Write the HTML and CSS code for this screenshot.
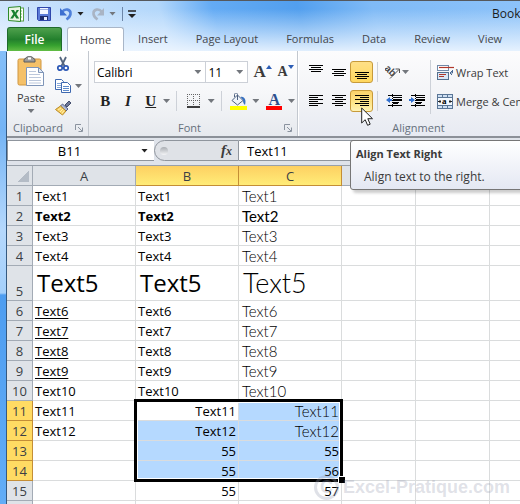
FILE: index.html
```html
<!DOCTYPE html>
<html lang="en">
<head>
  <meta charset="UTF-8">
  <meta name="viewport" content="width=device-width, initial-scale=1.0">
  <title>Book1</title>
  <link rel="stylesheet" href="styles.css">
</head>
<body>
  <div class="window">
    <header class="titlebar">
      <svg class="logo" width="16" height="16" viewBox="0 0 16 16">
        <rect x="9" y="2" width="6.500" height="13" fill="#fff" stroke="#58a046"/>
        <path d="M11 5h3M11 8h3M11 11h3" stroke="#76b867"/>
        <path d="M.5 1.500 12.500.5v15L.5 14.500z" fill="#e9f5e3" stroke="#2f8a2a"/>
        <path d="M3 4h3l1.200 2.500L8.600 4H11L8.300 8l2.900 4.500H8.300L6.600 9.700 5 12.500H2.200L5.300 8z" fill="#188130"/>
      </svg>
      <span class="bar"></span>
      <button class="quick save" aria-label="Save">
        <svg width="16" height="16" viewBox="0 0 16 16">
          <path d="M1.500 1.500h13v13h-12l-1-1z" fill="#5b7ad6" stroke="#2f46ab"/>
          <rect x="4" y="2" width="8" height="6" fill="#f3f6ff"/>
          <path d="M4 3.500h8" stroke="#9fb0e0"/>
          <rect x="4" y="10" width="8" height="4" fill="#1d2b6b"/>
          <rect x="8" y="11" width="3" height="3" fill="#e8edff"/>
        </svg>
      </button>
      <button class="quick undo" aria-label="Undo">
        <svg width="14" height="14" viewBox="0 0 14 14">
          <path d="M3 5C6 1 12 2 11.500 7c-.2 2.500-2 4-4 5.500" fill="none" stroke="#4f80da" stroke-width="2.600"/>
          <path d="M1 1v7.500h7z" fill="#3c6fd0"/>
        </svg>
      </button>
      <span class="arrow dark"></span>
      <button class="quick redo" aria-label="Redo">
        <svg width="14" height="14" viewBox="0 0 14 14">
          <path d="M11 5C8 1 2 2 2.500 7c.2 2.500 2 4 4 5.500" fill="none" stroke="#a9b4c4" stroke-width="2.600"/>
          <path d="M13 1v7.500H6z" fill="#a9b4c4"/>
        </svg>
      </button>
      <span class="arrow"></span>
      <span class="bar"></span>
      <button class="quick customize" aria-label="Customize Quick Access Toolbar">
        <svg width="8" height="8" viewBox="0 0 8 8"><path d="M0 1h8" stroke="#222" stroke-width="1.500"/><path d="M0 4h8L4 8z" fill="#222"/></svg>
      </button>
      <span class="title">Book1</span>
    </header>

    <nav class="tabs">
      <a class="tab file" href="#file">File</a>
      <a class="tab active" href="#home">Home</a>
      <a class="tab" href="#insert">Insert</a>
      <a class="tab" href="#layout">Page Layout</a>
      <a class="tab" href="#formulas">Formulas</a>
      <a class="tab" href="#data">Data</a>
      <a class="tab" href="#review">Review</a>
      <a class="tab" href="#view">View</a>
    </nav>

    <div class="ribbon">
      <section class="group clipboard">
        <div class="tools">
          <button class="paste">
            <svg width="28" height="32" viewBox="0 0 28 32">
              <rect x="1" y="4" width="23" height="26" rx="1.500" fill="#f5c169" stroke="#cf9640"/>
              <path d="M7 7V4.500L9 3c.5-2 6.500-2 7 0l2 1.500V7z" fill="#9b9b9b" stroke="#5d5d5d"/>
              <rect x="11" y="2.500" width="3" height="2" fill="#fff"/>
              <path d="M9.500 12.500h12l5 5v13h-17z" fill="#fff" stroke="#7f95b8"/>
              <path d="M21.500 12.500v5h5z" fill="#dfe8f5" stroke="#7f95b8"/>
              <path d="M12 16.500h7M12 19.500h11M12 22.500h12M12 25.500h12M12 28h12" stroke="#bcc8dc"/>
            </svg>
            <span>Paste</span>
            <span class="arrow"></span>
          </button>
          <div class="clips">
            <button aria-label="Cut">
              <svg width="16" height="16" viewBox="0 0 16 16">
                <path d="M5 1l4.500 9M11 1 6.500 10" stroke="#54657f" stroke-width="1.800"/>
                <circle cx="5" cy="12" r="2.200" fill="none" stroke="#2b57b5" stroke-width="1.700"/>
                <circle cx="11" cy="12" r="2.200" fill="none" stroke="#2b57b5" stroke-width="1.700"/>
              </svg>
            </button>
            <button aria-label="Copy">
              <svg width="16" height="16" viewBox="0 0 16 16">
                <path d="M.5 1.500h6l2 2v8h-8z" fill="#fff" stroke="#3f69b0"/>
                <path d="M2 5.500h5M2 7.500h5M2 9.500h5" stroke="#88a8d8"/>
                <path d="M6.500 4.500h6l3 3v7h-9z" fill="#fff" stroke="#3f69b0"/>
                <path d="M8 8.500h6M8 10.500h6M8 12.500h6" stroke="#5f8bcb"/>
              </svg>
              <span class="arrow"></span>
            </button>
            <button aria-label="Format Painter">
              <svg width="17" height="16" viewBox="0 0 17 16">
                <path d="M10 5l4-4 2 2-4 4z" fill="#6e7794" stroke="#424c6c"/>
                <path d="M7.500 4l5.500 5-2 2-5.500-5z" fill="#aeb8d4" stroke="#556088"/>
                <path d="M5.500 6l5.500 5-3.500 4L.5 9.500z" fill="#f7cf62" stroke="#b98a28"/>
                <path d="M3 10l3-2M5 12l3-3M7 13.500l2-3" stroke="#fff0b0"/>
              </svg>
            </button>
          </div>
        </div>
        <footer>
          <span>Clipboard</span>
          <svg class="launcher" width="8" height="8" viewBox="0 0 8 8"><path d="M.5 6V.5H6M3 3l4 4M7.500 3.500v4h-4" fill="none" stroke="#8a939f"/></svg>
        </footer>
      </section>

      <section class="group font">
        <div class="tools rows">
          <div class="row">
            <span class="combo family"><select aria-label="Font"><option>Calibri</option></select><span class="arrow"></span></span>
            <span class="combo size"><select aria-label="Font Size"><option>11</option></select><span class="arrow"></span></span>
            <button class="grow" aria-label="Grow Font"><b>A</b><svg width="6" height="4" viewBox="0 0 6 4"><path d="M0 4h6L3 0z" fill="#2c5db5"/></svg></button>
            <button class="shrink" aria-label="Shrink Font"><b>A</b><svg width="6" height="4" viewBox="0 0 6 4"><path d="M0 0h6L3 4z" fill="#2c5db5"/></svg></button>
          </div>
          <div class="row">
            <button class="letter"><b>B</b></button>
            <button class="letter"><i>I</i></button>
            <button class="letter"><u>U</u></button>
            <span class="arrow"></span>
            <span class="sep"></span>
            <button class="tool" aria-label="Borders">
              <svg width="14" height="14" viewBox="0 0 14 14">
                <path d="M.5 0v12M6.500 0v12M12.500 0v12M0 .5h13M0 6.500h13" stroke="#666" stroke-dasharray="1 1"/>
                <path d="M0 13h13" stroke="#000" stroke-width="1.500"/>
              </svg>
            </button>
            <span class="arrow"></span>
            <span class="sep"></span>
            <button class="tool" aria-label="Fill Color">
              <svg width="17" height="17" viewBox="0 0 17 17">
                <path d="M2 7.500 7.500 2 13 7.500 7.500 12z" fill="#eef3fa" stroke="#4e6180"/>
                <path d="M7.500 7V1.500c0-2-3-2-3 0V4" fill="none" stroke="#4e6180"/>
                <path d="M10.500 4c4-1 6 3 4.500 8-1.500-1-2-3-2-5z" fill="#3a72c0"/>
                <rect y="13" width="17" height="4" fill="#ff0"/>
              </svg>
            </button>
            <span class="arrow"></span>
            <button class="tool color" aria-label="Font Color"><b>A</b></button>
            <span class="arrow"></span>
          </div>
        </div>
        <footer>
          <span class="middle">Font</span>
          <svg class="launcher" width="8" height="8" viewBox="0 0 8 8"><path d="M.5 6V.5H6M3 3l4 4M7.500 3.500v4h-4" fill="none" stroke="#8a939f"/></svg>
        </footer>
      </section>

      <section class="group alignment">
        <div class="tools">
          <div class="rows">
            <div class="row">
              <button class="align" aria-label="Top Align"><svg width="14" height="14" viewBox="0 0 14 14"><path d="M0 .5h14M2 2.500h10M0 4.500h14M2 6.500h10" stroke="#000"/></svg></button>
              <button class="align" aria-label="Middle Align"><svg width="14" height="14" viewBox="0 0 14 14"><path d="M0 4.500h14M2 6.500h10M0 8.500h14M2 10.500h10" stroke="#000"/></svg></button>
              <button class="align on" aria-label="Bottom Align"><svg width="14" height="14" viewBox="0 0 14 14"><path d="M0 7.500h14M2 9.500h10M0 11.500h14M2 13.500h10" stroke="#000"/></svg></button>
              <span class="sep"></span>
              <button class="tool orient" aria-label="Orientation">
                <svg width="16" height="16" viewBox="0 0 16 16">
                  <text class="ab" x="-1" y="9" transform="rotate(45 4 7)">ab</text>
                  <path d="M5 14.500 14 5.500M10.500 5H14.500V9" fill="none" stroke="#555"/>
                </svg>
                <span class="arrow"></span>
              </button>
            </div>
            <div class="row">
              <button class="align" aria-label="Align Text Left"><svg width="14" height="14" viewBox="0 0 14 14"><path d="M0 1.500h14M0 3.500h9M0 5.500h14M0 7.500h9M0 9.500h14M0 11.500h9" stroke="#000"/></svg></button>
              <button class="align" aria-label="Center"><svg width="14" height="14" viewBox="0 0 14 14"><path d="M0 1.500h14M3 3.500h8M0 5.500h14M3 7.500h8M0 9.500h14M3 11.500h8" stroke="#000"/></svg></button>
              <button class="align on hot" aria-label="Align Text Right" aria-describedby="tip"><svg width="14" height="14" viewBox="0 0 14 14"><path d="M0 1.500h14M5 3.500h9M0 5.500h14M5 7.500h9M0 9.500h14M5 11.500h9" stroke="#000"/></svg></button>
              <span class="sep"></span>
              <button class="align" aria-label="Decrease Indent">
                <svg width="16" height="14" viewBox="0 0 16 14">
                  <path d="M2 1.500h14M7 3.500h9M7 9.500h5M2 11.500h14" stroke="#000"/><path d="M7 6h9" stroke="#000" stroke-width="2"/><path d="M7 8.500h6" stroke="#000"/>
                  <path d="M0 6l4-3v2h2v2H4v2z" fill="#2f6fd0"/><path d="M6.500 0v14" stroke="#000" stroke-dasharray="1 1"/>
                </svg>
              </button>
              <button class="align" aria-label="Increase Indent">
                <svg width="16" height="14" viewBox="0 0 16 14">
                  <path d="M2 1.500h14M7 3.500h9M7 9.500h5M2 11.500h14" stroke="#000"/><path d="M7 6h9" stroke="#000" stroke-width="2"/><path d="M7 8.500h6" stroke="#000"/>
                  <path d="M6 6 2 3v2H0v2h2v2z" fill="#2f6fd0"/><path d="M6.500 0v14" stroke="#000" stroke-dasharray="1 1"/>
                </svg>
              </button>
            </div>
          </div>
          <span class="divider"></span>
          <div class="rows">
            <button class="wide">
              <svg width="17" height="17" viewBox="0 0 17 17">
                <rect x=".5" y="1.500" width="11" height="5" fill="#fff" stroke="#7189a8"/>
                <rect x=".5" y="8.500" width="11" height="7" fill="#dbe7f5" stroke="#54708f"/>
                <path d="M2 3.500h15" stroke="#b0392c" stroke-width="1.200"/>
                <path d="M2 10.500h7M2 12.500h5" stroke="#b0392c"/>
                <path d="M15.500 6v3h-2M15 7l-2 2 2 2" fill="none" stroke="#4b6b94"/>
              </svg>
              <span>Wrap Text</span>
            </button>
            <button class="wide">
              <svg width="17" height="17" viewBox="0 0 17 17">
                <rect x=".5" y="1.500" width="15" height="14" fill="#cfe0f3" stroke="#5a7697"/>
                <path d="M1 4.500h14M1 12.500h14M5.500 2v2M10.500 2v2M5.500 13v2M10.500 13v2" stroke="#5a7697"/>
                <rect x="1" y="5" width="14" height="7" fill="#f4f9ff"/>
                <text class="a" x="5" y="11">a</text>
                <path d="M1 8.500h3M12 8.500h3M3 7v3M13 7v3" stroke="#222"/>
              </svg>
              <span>Merge &amp; Center</span>
            </button>
          </div>
        </div>
        <footer><span class="middle">Alignment</span></footer>
      </section>
    </div>

    <div class="formula-bar">
      <div class="name-box">
        <input type="text" value="B11" aria-label="Name Box">
        <span class="arrow dark"></span>
      </div>
      <div class="functions">
        <span class="knob"></span>
        <button aria-label="Insert Function"><i>f<small>x</small></i></button>
      </div>
      <input class="formula" type="text" value="Text11" aria-label="Formula">
    </div>

    <main class="sheet">
      <table>
        <colgroup>
          <col class="col-head"><col class="col-wide"><col class="col-wide"><col class="col-wide"><col class="col-std"><col class="col-std"><col class="col-std">
        </colgroup>
        <thead>
          <tr><th class="corner"></th><th>A</th><th class="sel">B</th><th class="sel">C</th><th></th><th></th><th></th></tr>
        </thead>
        <tbody>
          <tr><th>1</th><td>Text1</td><td>Text1</td><td class="thin">Text1</td><td></td><td></td><td></td></tr>
          <tr><th>2</th><td class="bold">Text2</td><td class="bold">Text2</td><td class="thin strong">Text2</td><td></td><td></td><td></td></tr>
          <tr><th>3</th><td>Text3</td><td>Text3</td><td class="thin">Text3</td><td></td><td></td><td></td></tr>
          <tr><th>4</th><td>Text4</td><td>Text4</td><td class="thin">Text4</td><td></td><td></td><td></td></tr>
          <tr class="tall"><th>5</th><td>Text5</td><td>Text5</td><td class="thin">Text5</td><td></td><td></td><td></td></tr>
          <tr><th>6</th><td class="under">Text6</td><td>Text6</td><td class="thin">Text6</td><td></td><td></td><td></td></tr>
          <tr><th>7</th><td class="under">Text7</td><td>Text7</td><td class="thin">Text7</td><td></td><td></td><td></td></tr>
          <tr><th>8</th><td class="under">Text8</td><td>Text8</td><td class="thin">Text8</td><td></td><td></td><td></td></tr>
          <tr><th>9</th><td class="under">Text9</td><td>Text9</td><td class="thin">Text9</td><td></td><td></td><td></td></tr>
          <tr><th>10</th><td>Text10</td><td>Text10</td><td class="thin">Text10</td><td></td><td></td><td></td></tr>
          <tr><th class="sel">11</th><td>Text11</td><td class="right current">Text11<span class="selection"></span></td><td class="right thin picked">Text11</td><td></td><td></td><td></td></tr>
          <tr><th class="sel">12</th><td>Text12</td><td class="right picked">Text12</td><td class="right thin picked">Text12</td><td></td><td></td><td></td></tr>
          <tr><th class="sel">13</th><td></td><td class="right picked">55</td><td class="right picked">55</td><td></td><td></td><td></td></tr>
          <tr><th class="sel">14</th><td></td><td class="right picked">55</td><td class="right picked">56</td><td></td><td></td><td></td></tr>
          <tr><th>15</th><td></td><td class="right">55</td><td class="right">57</td><td></td><td></td><td></td></tr>
          <tr><th></th><td></td><td></td><td></td><td></td><td></td><td></td></tr>
        </tbody>
      </table>
    </main>
  </div>

  <div class="tooltip" id="tip" role="tooltip">
    <strong>Align Text Right</strong>
    <p>Align text to the right.</p>
  </div>
  <svg class="cursor" width="13" height="20" viewBox="0 0 13 20">
    <path d="M.7 1v15l3.500-3.300 2.400 5.600 2.600-1.100-2.400-5.500h4.700z" fill="#fff" stroke="#222"/>
  </svg>
  <div class="watermark"><span class="copy">C</span><span>Excel-Pratique.com</span></div>
</body>
</html>
```

FILE: styles.css
```css
* {
  box-sizing: border-box;
}
body {
  margin: 0;
  height: 100vh;
  overflow: hidden;
  position: relative;
  font-family: "Open Sans", "Noto Sans", sans-serif;
  font-size: 11px;
  color: #3b3b3b;
  background: linear-gradient(to bottom, #8fc6fb 0, #74b4f5 130px, #b5d8fc 230px, #a5d0fb 293px, #4e9df0 295px, #62adf7 100%);
}
button {
  display: flex;
  align-items: center;
  justify-content: center;
  padding: 0;
  border: none;
  background: none;
  font: inherit;
  color: inherit;
}
svg {
  display: block;
  flex: none;
}
.window {
  height: 100%;
  padding-left: 6px;
  overflow: hidden;
  background:
    linear-gradient(to bottom, #35597f, #35597f) 6px 51px / 1px 100% no-repeat,
    linear-gradient(to bottom, rgba(255, 255, 255, 0) 8px, rgba(240, 247, 255, 0.9) 50px) 0 0 / 100% 50px no-repeat,
    linear-gradient(75deg, #cfe5fc 0, #b3d7fb 32%, #64abf4 42%, #529fee 58%, #7fbaf6 72%, #8cc2f9 100%) 0 0 / 100% 50px no-repeat;
  border-top: 1px solid #55585c;
}
.arrow {
  flex: none;
  width: 7px;
  height: 4px;
  background: #73777d;
  clip-path: polygon(0 0, 100% 0, 50% 100%);
}
.arrow.dark {
  background: #222;
}

/* title bar */
.titlebar {
  display: flex;
  align-items: center;
  height: 26px;
  padding: 0 0 1px 2px;
  overflow: hidden;
}
.titlebar .bar {
  width: 1px;
  height: 14px;
  background: #6c86a8;
  margin: 0 4px;
}
.quick {
  width: 22px;
  height: 22px;
}
.quick.customize {
  width: 10px;
}
.quick.redo {
  margin-left: 3px;
}
.titlebar .redo + .arrow {
  margin: 0 2px 0 0;
}
.title {
  margin-left: auto;
  width: 28px;
  overflow: hidden;
  font-size: 12px;
  color: #1c1c1c;
}

/* tabs */
.tabs {
  display: flex;
  height: 24px;
  padding-left: 1px;
  overflow: hidden;
}
.tab {
  flex: none;
  padding: 0 14px;
  line-height: 24px;
  color: #45474c;
  text-decoration: none;
}
.tab.file {
  width: 55px;
  margin-right: 5px;
  padding: 0;
  text-align: center;
  font-size: 12px;
  font-weight: 600;
  color: #fff;
  border: 1px solid #1f6b2c;
  border-bottom: none;
  border-radius: 3px 3px 0 0;
  background: linear-gradient(to bottom, #4fa14d, #23802d 50%, #35a02f 75%, #62bd45);
}
.tab.active {
  padding: 0 12px;
  background: #fff;
  border: 1px solid #a9b6c8;
  border-bottom: none;
  border-radius: 3px 3px 0 0;
}

/* ribbon */
.ribbon {
  display: flex;
  height: 87px;
  margin-left: 1px;
  overflow: hidden;
  background: linear-gradient(to bottom, #fff, #f6f7f9 50%, #e6e9ee);
  border-bottom: 2px solid #8b9098;
}
.group {
  display: flex;
  flex-direction: column;
  flex: none;
  border-right: 1px solid #c3c8cf;
}
.clipboard {
  width: 82px;
}
.font {
  width: 209px;
}
.alignment {
  width: 240px;
  background: linear-gradient(to bottom, #fcfcfd, #f3f4f7 50%, #e7eaf2);
  border-left: 1px solid #fff;
}
.tools {
  display: flex;
  flex: 1;
}
.group footer {
  display: flex;
  align-items: center;
  justify-content: space-between;
  height: 17px;
  padding: 0 5px 0 6px;
  color: #66707c;
}
.group footer .middle {
  flex: 1;
  text-align: center;
}
.rows {
  display: flex;
  flex-direction: column;
  gap: 7px;
  padding-top: 10px;
}
.row {
  display: flex;
  align-items: center;
  height: 22px;
}
.row > .arrow {
  margin: 0 2px 0 1px;
}
.sep {
  width: 1px;
  height: 20px;
  margin: 0 4px;
  background: #cdd1d8;
}
.divider {
  width: 1px;
  height: 54px;
  margin: 9px 6px 0 0;
  background: #cdd1d8;
}
.paste {
  flex-direction: column;
  justify-content: flex-start;
  width: 48px;
  padding-top: 4px;
  line-height: 22px;
}
.clips {
  display: flex;
  flex-direction: column;
  padding-top: 2px;
}
.clips button {
  justify-content: flex-start;
  gap: 4px;
  height: 22px;
}

.font .tools {
  padding-left: 5px;
}
.combo {
  display: flex;
  align-items: center;
  height: 22px;
  padding-right: 4px;
  border: 1px solid #ccd0d7;
  background: #fff;
}
.combo select {
  appearance: none;
  flex: 1;
  min-width: 0;
  padding: 0 2px;
  border: none;
  background: none;
  font: inherit;
  font-size: 12px;
  color: #000;
}
.combo.family {
  width: 113px;
}
.combo.size {
  width: 43px;
  margin-left: -1px;
}
.grow,
.shrink {
  width: 23px;
  align-items: flex-start;
  font-family: "Liberation Serif", serif;
  line-height: 22px;
}
.grow {
  margin-left: 3px;
  font-size: 17px;
}
.shrink {
  font-size: 14px;
}
.grow svg,
.shrink svg {
  margin-top: 4px;
}
.letter {
  width: 23px;
  font-family: "Liberation Serif", serif;
  font-size: 15px;
  color: #222;
}
.letter i {
  font-weight: bold;
}
.letter u {
  font-weight: bold;
}
.tool {
  width: 24px;
}
.font .tool {
  width: 26px;
}
.color b {
  width: 16px;
  border-bottom: 4px solid #f00;
  font-family: "Liberation Serif", serif;
  font-size: 16px;
  line-height: 13px;
  color: #2c4f8f;
}

.alignment .tools {
  padding-left: 5px;
}
.align {
  width: 23px;
  height: 22px;
}
.align.on {
  border: 1px solid #c79a3a;
  border-radius: 3px;
  background: linear-gradient(to bottom, #ffe087, #ffd75e);
}
.align.hot {
  background: linear-gradient(to bottom, #fbd26a, #ffe68a 60%, #fff3b4);
}
.alignment .orient {
  width: 48px;
  justify-content: flex-start;
  gap: 1px;
  padding-left: 3px;
}
.ab {
  font: bold 10px "Liberation Sans", sans-serif;
  fill: #444;
}
.a {
  font: bold 9px "Liberation Serif", serif;
  fill: #000;
}
.wide {
  gap: 2px;
  height: 22px;
  justify-content: flex-start;
  white-space: nowrap;
}

/* formula bar */
.formula-bar {
  display: flex;
  height: 28px;
  margin-left: 1px;
  padding: 2px 0 4px;
  background: #dfe3ea;
  border-bottom: 1px solid #98a0aa;
}
.formula-bar input {
  border: none;
  background: none;
  font: 13px "Open Sans", "Noto Sans", sans-serif;
  color: #000;
  min-width: 0;
}
.name-box {
  display: flex;
  align-items: center;
  width: 147px;
  padding-right: 6px;
  background: #fff;
  border: 1px solid #8f959d;
  border-right: none;
}
.name-box input {
  flex: 1;
  padding: 0 10px 0 0;
  text-align: center;
}
.functions {
  display: flex;
  align-items: center;
  justify-content: space-between;
  width: 85px;
  padding: 0 6px 0 5px;
  background: #dfe2e7;
  border: 1px solid #8f959d;
  border-radius: 11px 0 0 11px;
}
.knob {
  width: 8px;
  height: 8px;
  border-radius: 50%;
  background: linear-gradient(to bottom, #a9adb3, #f4f5f7);
}
.functions button {
  font: bold 15px "Liberation Serif", serif;
}
.functions small {
  font-size: 12px;
}
.formula-bar .formula {
  flex: 1;
  padding: 0 8px;
  background: #fff;
  border-top: 1px solid #8f959d;
  border-bottom: 1px solid #8f959d;
}

/* sheet */
.sheet {
  margin-left: 1px;
  background: #fff;
  overflow: hidden;
}
table {
  width: 557px;
  table-layout: fixed;
  border-collapse: separate;
  border-spacing: 0;
  font-size: 13px;
  color: #000;
}
.col-head {
  width: 26px;
}
.col-wide {
  width: 103px;
}
.col-std {
  width: 74px;
}
tr {
  height: 20px;
}
th,
td {
  height: 20px;
  padding: 2px 2px 0;
  line-height: 17px;
  border-right: 1px solid #dadcdd;
  border-bottom: 1px solid #dadcdd;
  text-align: left;
  vertical-align: bottom;
  white-space: nowrap;
}
th {
  padding: 2px 0 0;
  background: #dfe3e8;
  border-color: #a3abb5;
  font-weight: normal;
  text-align: center;
  color: #3b3f45;
}
th.sel {
  background: #ffdb63;
  border-color: #c48e36;
}
thead th.sel {
  background: linear-gradient(to bottom, #fdd062, #ffec78);
}
th.corner {
  background: linear-gradient(135deg, #dfe3e8 50%, #b4bcc6 50%) 11px 5px / 11px 11px no-repeat, #dfe3e8;
}
.tall td {
  height: 35px;
  padding: 0 4px;
  font-size: 24px;
  line-height: 34px;
}
.bold {
  font-weight: bold;
}
.under {
  text-decoration: underline;
  text-underline-offset: 2px;
}
.thin {
  padding-left: 3px;
  font-family: Lato, sans-serif;
  font-weight: 300;
  font-size: 15px;
}
.tall .thin {
  font-size: 27px;
}
.strong {
  font-weight: 400;
}
.right {
  text-align: right;
}
.picked {
  background: #b5d9ff;
}
.current {
  position: relative;
}
/* range B11:C14, drawn over the cells from the active one */
.selection {
  position: absolute;
  left: -2px;
  top: -2px;
  width: 209px;
  height: 83px;
  border: 3px solid #000;
  box-shadow: inset 0 0 0 1px #fff;
}
.selection::after {
  content: "";
  position: absolute;
  right: -5px;
  bottom: -4px;
  width: 6px;
  height: 6px;
  background: #000;
  border: solid #fff;
  border-width: 1px 0 0 1px;
}

/* things lying over the window */
.tooltip {
  position: absolute;
  left: 350px;
  right: -4px;
  top: 140px;
  height: 50px;
  padding: 4px 5px;
  border: 1px solid #767676;
  border-radius: 3px;
  background: linear-gradient(to bottom, #fff, #e4e8f3);
  box-shadow: 3px 3px 3px rgba(0, 0, 0, 0.2);
  line-height: 18px;
}
.tooltip strong {
  font-weight: 700;
}
.tooltip p {
  margin: 5px 0 0 8px;
  font-size: 12px;
}
.cursor {
  position: absolute;
  left: 361px;
  top: 107px;
}
.watermark {
  position: absolute;
  left: 314px;
  top: 475px;
  display: flex;
  align-items: center;
  gap: 4px;
  font: bold 18px "Liberation Sans", sans-serif;
  color: rgba(150, 155, 175, 0.3);
}
.copy {
  width: 25px;
  height: 25px;
  border: 3px solid rgba(150, 155, 175, 0.3);
  border-radius: 50%;
  line-height: 19px;
  text-align: center;
}
```
